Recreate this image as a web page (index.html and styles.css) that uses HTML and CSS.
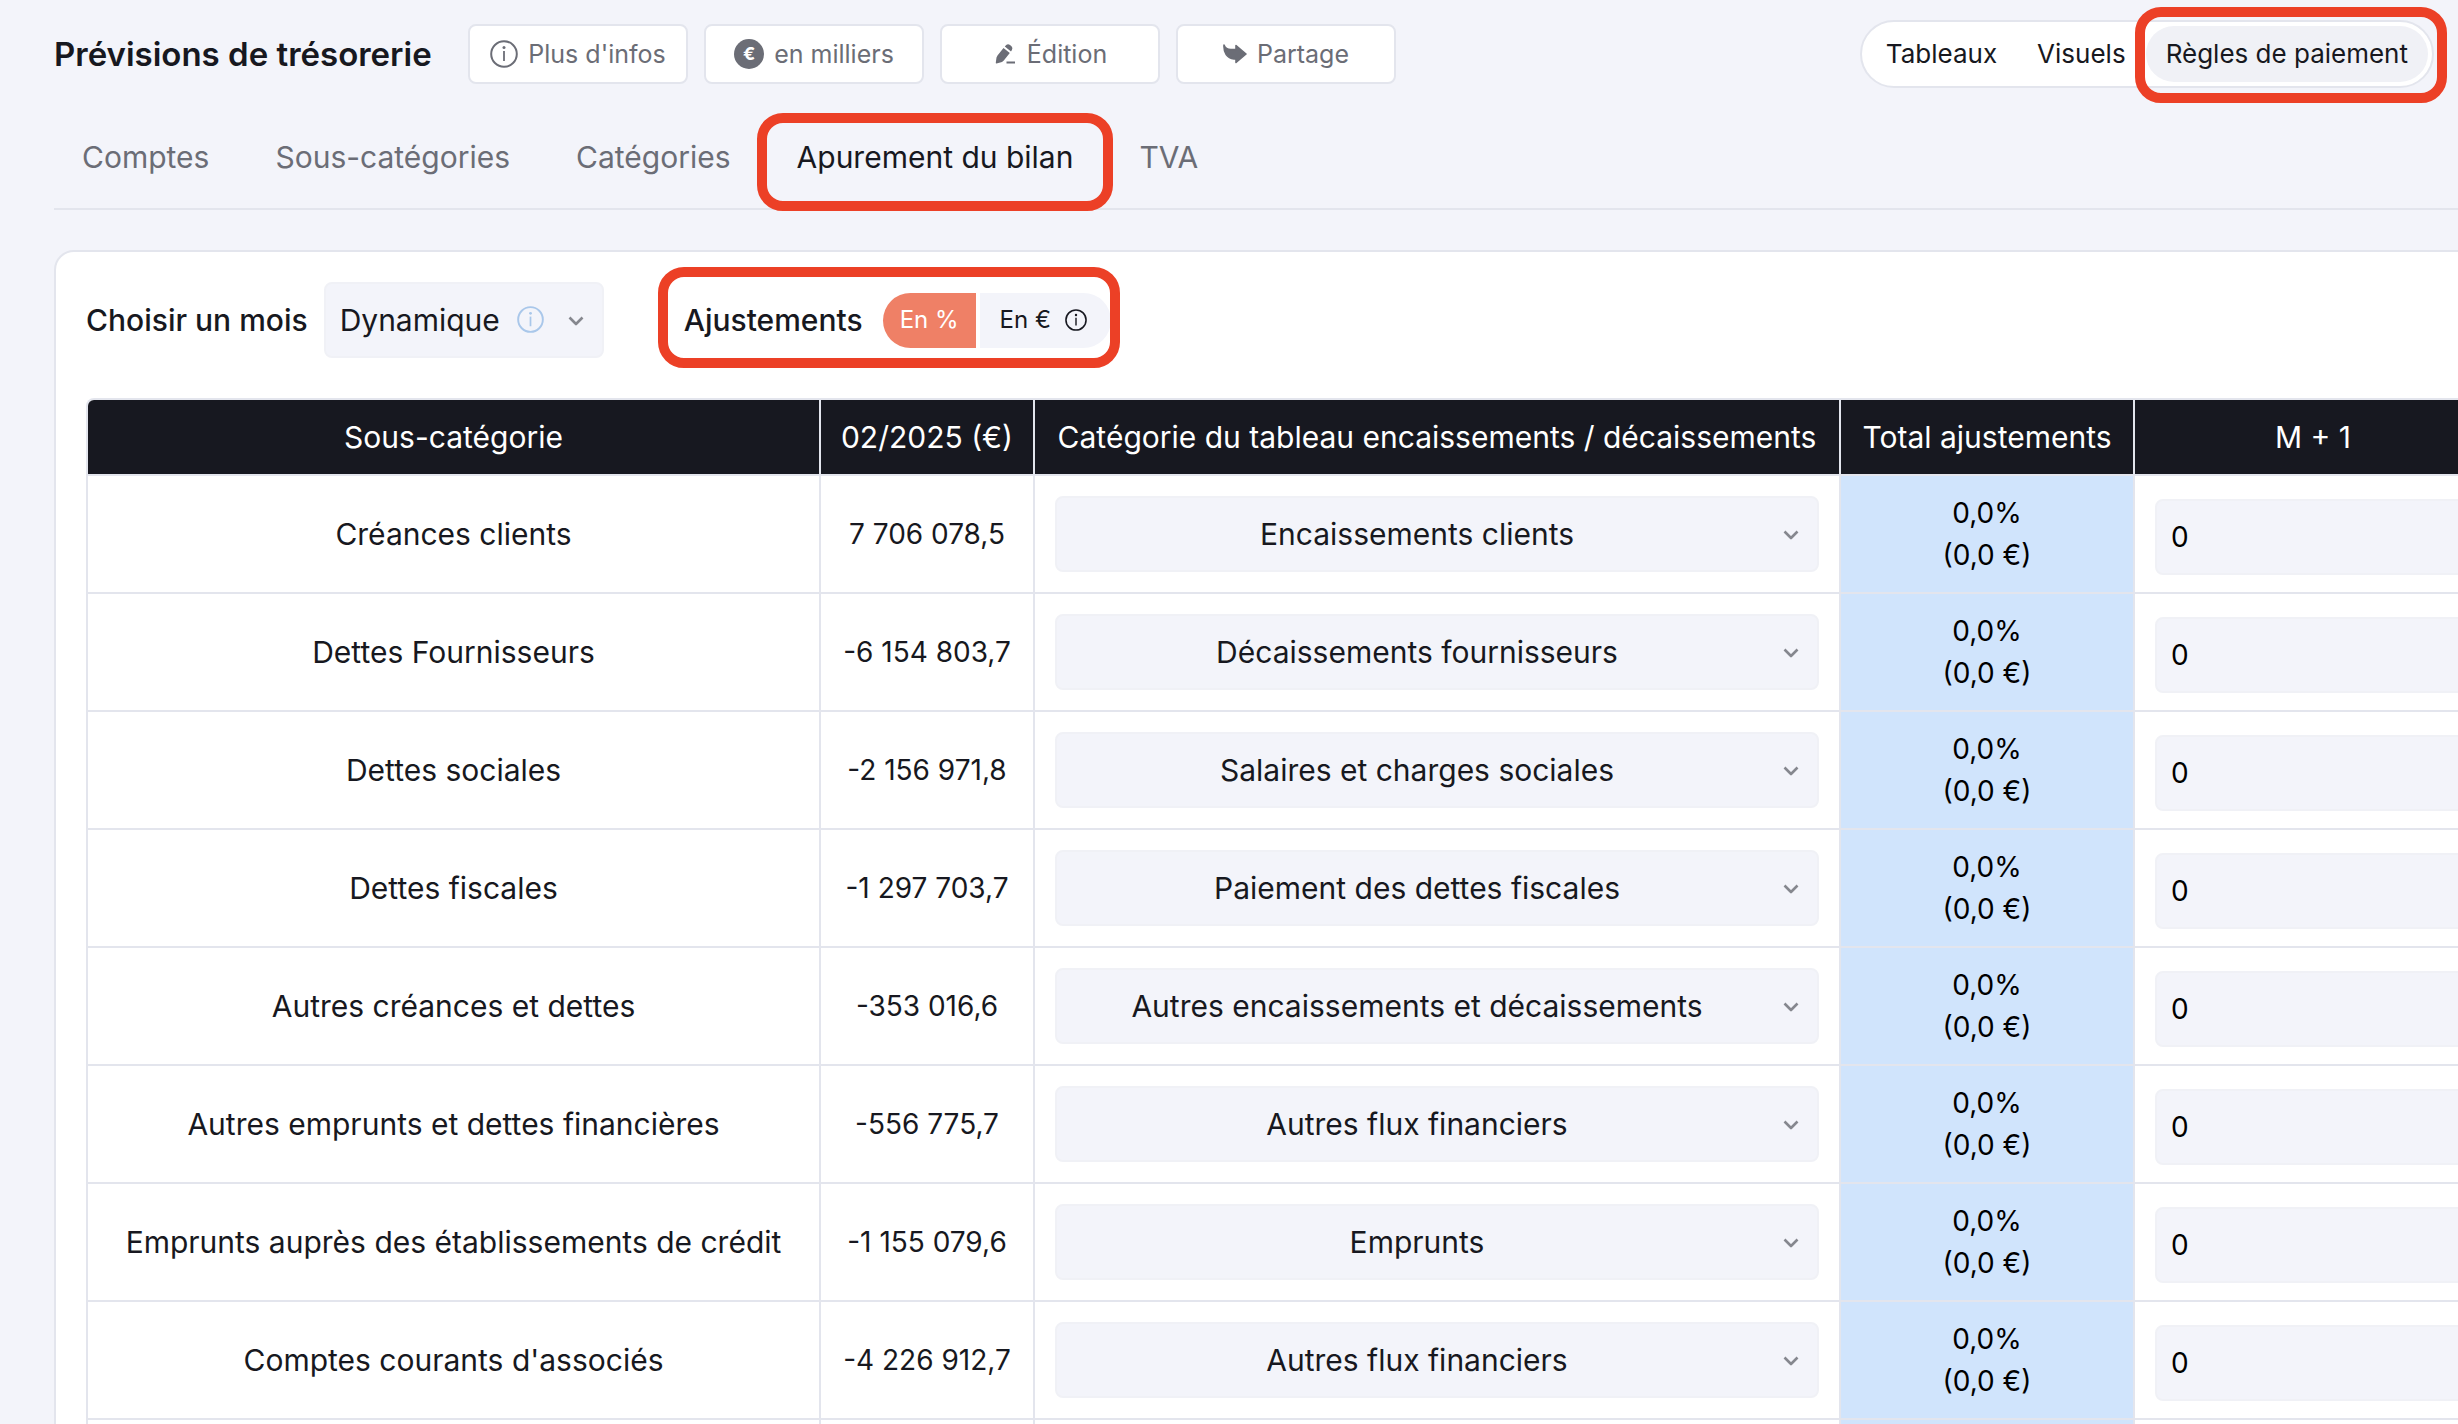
FILE: index.html
```html
<!DOCTYPE html>
<html lang="fr">
<head>
<meta charset="utf-8">
<title>Prévisions de trésorerie</title>
<link rel="stylesheet" href="styles.css">
</head>
<body>
<svg class="sprite" aria-hidden="true">
  <symbol id="info" viewBox="0 0 28 28"><circle cx="14" cy="14" r="12.8" fill="none" stroke="currentColor" stroke-width="2"/><circle cx="14" cy="7.600" r="1.500" fill="currentColor"/><path d="M14 11v10" stroke="currentColor" stroke-width="1.800"/></symbol>
  <symbol id="chevron" viewBox="0 0 16 10"><path d="M1.500 1.500 8 8l6.500-6.500" fill="none" stroke="currentColor" stroke-width="2.600" stroke-linejoin="round"/></symbol>
</svg>
<div class="app">
  <header class="topbar">
    <h1>Prévisions de trésorerie</h1>
    <div class="actions">
      <button class="action" type="button"><svg class="icon-28"><use href="#info"/></svg>Plus d'infos</button>
      <button class="action" type="button"><span class="coin">€</span>en milliers</button>
      <button class="action" type="button"><svg class="icon-24" viewBox="0 0 24 24"><path d="M3.500 21.500Q2.600 21.500 2.800 20.500L3.500 15.500 4.500 13.500 10.500 6 16.800 11 10.800 18.500 9 20z M11.800 4.400 13.200 2.900Q15 1.400 17 2.900L18.500 4.200Q20.200 6 18.900 8L18 9.400z M13.500 19.500H22v2h-8.500z" fill="currentColor"/></svg>Édition</button>
      <button class="action" type="button"><svg class="icon-24" viewBox="0 0 24 24"><path d="M1 3C2 6 4.500 7.500 8 7.500h5V3.500L23 12 13 20.500V17h-2C4 16 .5 10.500 1 3z" fill="currentColor" stroke="currentColor" stroke-width="1.600" stroke-linejoin="round"/></svg>Partage</button>
    </div>
    <nav class="views" aria-label="Vues">
      <a class="view" href="#tableaux">Tableaux</a>
      <a class="view" href="#visuels">Visuels</a>
      <a class="view view-active highlight" href="#regles" aria-current="page">Règles de paiement</a>
    </nav>
  </header>

  <nav class="tabs" aria-label="Règles de paiement">
    <a class="tab" href="#comptes">Comptes</a>
    <a class="tab" href="#sous-categories">Sous-catégories</a>
    <a class="tab" href="#categories">Catégories</a>
    <a class="tab tab-active highlight" href="#apurement" aria-current="page">Apurement du bilan</a>
    <a class="tab" href="#tva">TVA</a>
  </nav>

  <main class="card">
    <div class="filters">
      <label for="month">Choisir un mois</label>
      <span class="select month">
        <select id="month"><option>Dynamique</option></select>
        <svg class="month-info"><use href="#info"/></svg>
        <svg class="chevron"><use href="#chevron"/></svg>
      </span>
      <div class="adjust highlight" role="group" aria-labelledby="adjust-label">
        <span id="adjust-label">Ajustements</span>
        <div class="toggle">
          <button class="unit unit-active" type="button">En %</button>
          <button class="unit" type="button">En €<svg class="icon-22"><use href="#info"/></svg></button>
        </div>
      </div>
    </div>

    <table class="grid">
      <colgroup><col class="c-name"><col class="c-amount"><col class="c-category"><col class="c-total"><col class="c-month"></colgroup>
      <thead>
        <tr><th>Sous-catégorie</th><th>02/2025 (€)</th><th>Catégorie du tableau encaissements / décaissements</th><th>Total ajustements</th><th>M + 1</th></tr>
      </thead>
      <tbody>
        <tr><td>Créances clients</td><td class="number">7 706 078,5</td><td><span class="select"><select aria-label="Catégorie, Créances clients"><option>Encaissements clients</option></select><svg class="chevron"><use href="#chevron"/></svg></span></td><td class="number total">0,0%<br>(0,0 €)</td><td><input type="text" value="0" aria-label="M + 1, Créances clients"></td></tr>
        <tr><td>Dettes Fournisseurs</td><td class="number">-6 154 803,7</td><td><span class="select"><select aria-label="Catégorie, Dettes Fournisseurs"><option>Décaissements fournisseurs</option></select><svg class="chevron"><use href="#chevron"/></svg></span></td><td class="number total">0,0%<br>(0,0 €)</td><td><input type="text" value="0" aria-label="M + 1, Dettes Fournisseurs"></td></tr>
        <tr><td>Dettes sociales</td><td class="number">-2 156 971,8</td><td><span class="select"><select aria-label="Catégorie, Dettes sociales"><option>Salaires et charges sociales</option></select><svg class="chevron"><use href="#chevron"/></svg></span></td><td class="number total">0,0%<br>(0,0 €)</td><td><input type="text" value="0" aria-label="M + 1, Dettes sociales"></td></tr>
        <tr><td>Dettes fiscales</td><td class="number">-1 297 703,7</td><td><span class="select"><select aria-label="Catégorie, Dettes fiscales"><option>Paiement des dettes fiscales</option></select><svg class="chevron"><use href="#chevron"/></svg></span></td><td class="number total">0,0%<br>(0,0 €)</td><td><input type="text" value="0" aria-label="M + 1, Dettes fiscales"></td></tr>
        <tr><td>Autres créances et dettes</td><td class="number">-353 016,6</td><td><span class="select"><select aria-label="Catégorie, Autres créances et dettes"><option>Autres encaissements et décaissements</option></select><svg class="chevron"><use href="#chevron"/></svg></span></td><td class="number total">0,0%<br>(0,0 €)</td><td><input type="text" value="0" aria-label="M + 1, Autres créances et dettes"></td></tr>
        <tr><td>Autres emprunts et dettes financières</td><td class="number">-556 775,7</td><td><span class="select"><select aria-label="Catégorie, Autres emprunts et dettes financières"><option>Autres flux financiers</option></select><svg class="chevron"><use href="#chevron"/></svg></span></td><td class="number total">0,0%<br>(0,0 €)</td><td><input type="text" value="0" aria-label="M + 1, Autres emprunts et dettes financières"></td></tr>
        <tr><td>Emprunts auprès des établissements de crédit</td><td class="number">-1 155 079,6</td><td><span class="select"><select aria-label="Catégorie, Emprunts auprès des établissements de crédit"><option>Emprunts</option></select><svg class="chevron"><use href="#chevron"/></svg></span></td><td class="number total">0,0%<br>(0,0 €)</td><td><input type="text" value="0" aria-label="M + 1, Emprunts auprès des établissements de crédit"></td></tr>
        <tr><td>Comptes courants d'associés</td><td class="number">-4 226 912,7</td><td><span class="select"><select aria-label="Catégorie, Comptes courants d'associés"><option>Autres flux financiers</option></select><svg class="chevron"><use href="#chevron"/></svg></span></td><td class="number total">0,0%<br>(0,0 €)</td><td><input type="text" value="0" aria-label="M + 1, Comptes courants d'associés"></td></tr>
        <tr><td></td><td></td><td></td><td class="total"></td><td></td></tr>
      </tbody>
    </table>
  </main>
</div>
</body>
</html>
```
FILE: styles.css
```css
:root {
  --ink: #171820;
  --muted: #6b6d76;
  --line: #e3e5ed;
  --soft: #f3f4fa;
  --red: #ec4026;
}

* { box-sizing: border-box; }

body {
  margin: 0;
  background: var(--soft);
  color: var(--ink);
  font-family: Inter, "Liberation Sans", sans-serif;
  font-size: 30px;
  line-height: 42px;
}

button, input, select {
  margin: 0;
  border: 0;
  font: inherit;
  color: inherit;
}

a { color: inherit; text-decoration: none; }
svg { display: block; flex: none; }
.sprite { position: absolute; width: 0; height: 0; }

.app {
  height: 100vh;
  padding: 20px 0 0 54px;
  overflow: auto;
  scrollbar-width: none;
}

.icon-28 { width: 28px; height: 28px; }
.icon-24 { width: 24px; height: 24px; }
.icon-22 { width: 22px; height: 22px; }

/* Red callout frame drawn around a control */
.highlight { position: relative; }
.highlight::after {
  content: "";
  position: absolute;
  border: 10px solid var(--red);
  border-radius: 26px;
  pointer-events: none;
}

.topbar {
  display: flex;
  align-items: center;
  height: 68px;
  padding-right: 24px;
}

h1 {
  margin: 0;
  width: 414px;
  font-size: 33px;
  font-weight: 600;
  line-height: 40px;
  white-space: nowrap;
}

.actions { display: flex; gap: 16px; }

.action {
  display: flex;
  align-items: center;
  justify-content: center;
  gap: 10px;
  width: 220px;
  height: 60px;
  padding: 0;
  background: #fff;
  border: 2px solid var(--line);
  border-radius: 8px;
  color: var(--muted);
  font-size: 25px;
  white-space: nowrap;
}

.coin {
  width: 30px;
  height: 30px;
  border-radius: 50%;
  background: var(--muted);
  color: #fff;
  font-size: 18px;
  font-weight: 700;
  line-height: 30px;
  text-align: center;
}

.views {
  display: flex;
  height: 68px;
  margin-left: auto;
  padding: 4px;
  background: #fff;
  border: 2px solid var(--line);
  border-radius: 34px;
  font-size: 26px;
  line-height: 56px;
}

.view { padding: 0 20px; border-radius: 28px; white-space: nowrap; }
.view-active { background: #f0f1f6; }
.view-active::after { inset: -19px -19px -21px -11px; }

.tabs {
  display: flex;
  align-items: flex-start;
  gap: 10px;
  height: 122px;
  padding-top: 48px;
  border-bottom: 2px solid var(--line);
  color: var(--muted);
}

.tab { padding: 0 28px; white-space: nowrap; }
.tab-active { color: var(--ink); }
.tab-active::after { inset: -23px -12px -33px -12px; }

.card {
  width: max-content;
  min-width: 100%;
  margin-top: 40px;
  padding: 30px;
  background: #fff;
  border: 2px solid var(--line);
  border-radius: 20px;
}

.filters {
  display: flex;
  align-items: center;
  height: 76px;
  margin-bottom: 40px;
  font-weight: 500;
}

.select {
  display: block;
  position: relative;
}

.select select {
  appearance: none;
  display: block;
  width: 100%;
  height: 76px;
  padding: 0 56px 0 16px;
  background: var(--soft);
  border: 2px solid #f0f1f6;
  border-radius: 8px;
  text-align: center;
  text-align-last: center;
}

.chevron {
  position: absolute;
  right: 20px;
  top: 34px;
  width: 16px;
  height: 10px;
  color: #85878e;
}

.month { width: 280px; margin: 0 80px 0 16px; font-weight: 400; }
.month select { padding-left: 14px; text-align: left; text-align-last: left; }
.month-info {
  position: absolute;
  left: 193px;
  top: 24px;
  width: 27px;
  height: 27px;
  color: #a9c7ea;
}

.adjust { display: flex; align-items: center; gap: 20px; }
.adjust::after { inset: -26px -9px -20px -26px; }

.toggle { display: flex; gap: 4px; font-size: 24px; }
.unit {
  display: flex;
  align-items: center;
  gap: 14px;
  height: 55px;
  padding: 0 24px 0 20px;
  background: var(--soft);
  border-radius: 0 28px 28px 0;
  font-weight: 400;
}
.unit-active {
  padding: 0 17px;
  background: #ef8066;
  border-radius: 28px 0 0 28px;
  color: #fff;
}

.grid {
  table-layout: fixed;
  width: 2407px;
  border: 2px solid var(--line);
  border-right: 0;
  border-radius: 8px 0 0 0;
  border-spacing: 0;
  overflow: hidden;
}

.c-name { width: 733px; }
.c-amount { width: 214px; }
.c-category { width: 806px; }
.c-total { width: 294px; }
.c-month { width: 358px; }

.grid th, .grid td {
  height: 118px;
  padding: 0 20px;
  border-right: 2px solid var(--line);
  border-bottom: 2px solid var(--line);
  text-align: center;
  white-space: nowrap;
}

.grid th {
  height: 76px;
  background: var(--ink);
  color: #fff;
  font-weight: 400;
}

.grid th:nth-child(2), .grid .number { padding: 0 10px; }
.grid .number { font-size: 28px; }
.grid .total { background: #d0e4fc; color: #000; }

.grid input {
  display: block;
  width: 100%;
  height: 76px;
  margin-top: 6px;
  padding: 0 14px;
  background: var(--soft);
  border: 2px solid #f0f1f6;
  border-radius: 8px;
  color: #000;
  font-size: 28px;
}
```
